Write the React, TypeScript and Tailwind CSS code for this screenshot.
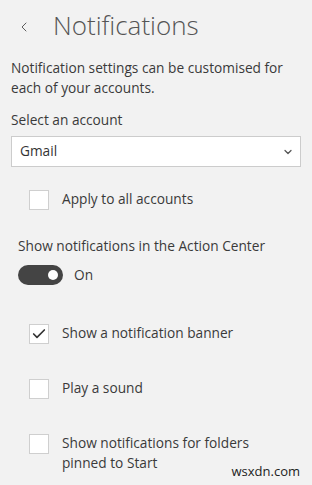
import { Check, ChevronDown, ChevronLeft } from 'lucide-react';

const Box = ({ checked }: { checked?: boolean }) => (
  <span className="flex h-5 w-5 shrink-0 items-center justify-center border border-[#cfcfcf] bg-white">
    {checked ? <Check className="h-4 w-4 text-[#333]" strokeWidth={2.5} /> : null}
  </span>
);

const Option = ({ label, checked }: { label: React.ReactNode; checked?: boolean }) => (
  <div className="flex items-start gap-[13px] pl-[29px]">
    <Box checked={checked} />
    <span className="mt-[-1px] text-[13.7px] leading-[20px] text-[#3a3a3a]">{label}</span>
  </div>
);

export default function App() {
  return (
    <div className="relative h-[485px] w-[312px] overflow-hidden bg-[#f2f2f2] font-['Open_Sans',sans-serif] text-[#333]">
      <div className="flex items-center pt-[8px]">
        <ChevronLeft className="ml-[16px] mt-[4px] h-[16px] w-[16px] text-[#444]" strokeWidth={1.3} />
        <h1 className="ml-[21px] text-[26px] font-light leading-[34px] text-[#555]">Notifications</h1>
      </div>

      <p className="mt-[16px] px-[11px] text-[13.7px] leading-[20px] text-[#3a3a3a]">
        Notification settings can be customised for each of your accounts.
      </p>

      <p className="mt-[12px] px-[11px] text-[13.7px] leading-[20px] text-[#3a3a3a]">Select an account</p>

      <div className="mx-[11px] mt-[6px] flex h-[31px] items-center justify-between border border-[#cccccc] bg-white pl-[8px] pr-[6px]">
        <span className="text-[13.7px] text-[#333]">Gmail</span>
        <ChevronDown className="h-3 w-3 text-[#555]" strokeWidth={2.5} />
      </div>

      <div className="mt-[23px]">
        <Option label="Apply to all accounts" />
      </div>

      <p className="mt-[26px] px-[18px] text-[13.7px] leading-[20px] text-[#3a3a3a]">
        Show notifications in the Action Center
      </p>

      <div className="mt-[9px] flex items-center gap-[11px] pl-[18px]">
        <span className="flex h-[20px] w-[45px] items-center justify-end rounded-full bg-[#444] pr-[5px]">
          <span className="h-[10px] w-[10px] rounded-full bg-white" />
        </span>
        <span className="text-[13.7px] leading-[20px] text-[#3a3a3a]">On</span>
      </div>

      <div className="mt-[39px] flex flex-col gap-[35px]">
        <Option label="Show a notification banner" checked />
        <Option label="Play a sound" />
        <Option
          label={
            <>
              Show notifications for folders
              <br />
              pinned to Start
            </>
          }
        />
      </div>

      <span className="absolute bottom-[4px] right-[12px] text-[13px] text-[#222]">wsxdn.com</span>
    </div>
  );
}
